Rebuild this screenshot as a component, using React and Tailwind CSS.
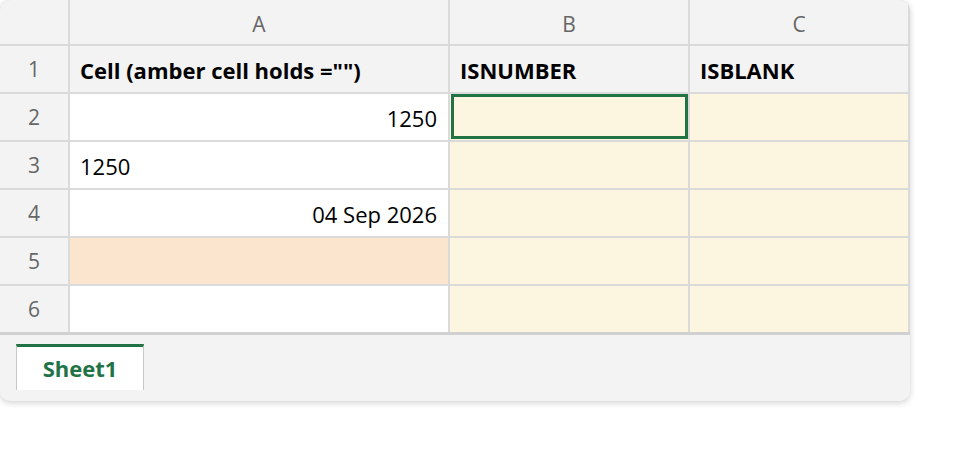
import React from "react";

const cols = ["A", "B", "C"];

const rows = [
  { n: 1, a: 'Cell (amber cell holds ="")', b: "ISNUMBER", c: "ISBLANK", head: true },
  { n: 2, a: "1250", align: "right", sel: true },
  { n: 3, a: "1250" },
  { n: 4, a: "04 Sep 2026", align: "right" },
  { n: 5, a: "", amber: true },
  { n: 6, a: "" },
];

export default function App() {
  return (
    <div className="w-[958px] h-[450px] bg-white" style={{ fontFamily: '"Open Sans", "Noto Sans", sans-serif' }}>
      <div className="w-[910px] rounded-[10px] overflow-hidden bg-[#f3f3f3] shadow-[0_2px_6px_rgba(0,0,0,0.18)]">
        <div className="grid grid-cols-[68px_378px_238px_218px] grid-rows-[44px_repeat(6,46px)] gap-[2px] pr-[2px] bg-[#dadada] border-b-[3px] border-[#d0d0d0] text-[22px]">
          <div className="bg-[#f3f3f3]" />
          {cols.map((c) => (
            <div key={c} className="bg-[#f3f3f3] flex items-center justify-center pt-[5px] text-[#666666] text-[21px]">
              {c}
            </div>
          ))}
          {rows.map((r) => (
            <React.Fragment key={r.n}>
              <div className="bg-[#f3f3f3] flex items-center justify-center pt-[2px] text-[#666666] text-[21px]">{r.n}</div>
              {r.head ? (
                <>
                  <div className="bg-[#f3f3f3] flex items-center pl-[10px] pt-[2px] font-bold text-black">{r.a}</div>
                  <div className="bg-[#f3f3f3] flex items-center pl-[10px] pt-[2px] font-bold text-black">{r.b}</div>
                  <div className="bg-[#f3f3f3] flex items-center pl-[10px] pt-[2px] font-bold text-black">{r.c}</div>
                </>
              ) : (
                <>
                  <div
                    className={
                      (r.amber ? "bg-[#fbe5ce] " : "bg-white ") +
                      (r.align === "right" ? "justify-end pr-[11px] " : "justify-start pl-[10px] ") +
                      "flex items-center pt-[2px] text-black"
                    }
                  >
                    {r.a}
                  </div>
                  <div className="bg-[#fcf5e0] flex">
                    {r.sel && <div className="flex-1 ml-[1px] mb-[1px] border-[3px] border-[#217346]" />}
                  </div>
                  <div className="bg-[#fcf5e0]" />
                </>
              )}
            </React.Fragment>
          ))}
        </div>
        <div className="h-[66px] pt-[9px] pl-[16px]">
          <div className="w-[128px] h-[46px] bg-white border-t-[3px] border-t-[#217346] border-x border-x-[#c8c8c8] flex items-center justify-center font-bold text-[22px] text-[#217346]">
            Sheet1
          </div>
        </div>
      </div>
    </div>
  );
}
